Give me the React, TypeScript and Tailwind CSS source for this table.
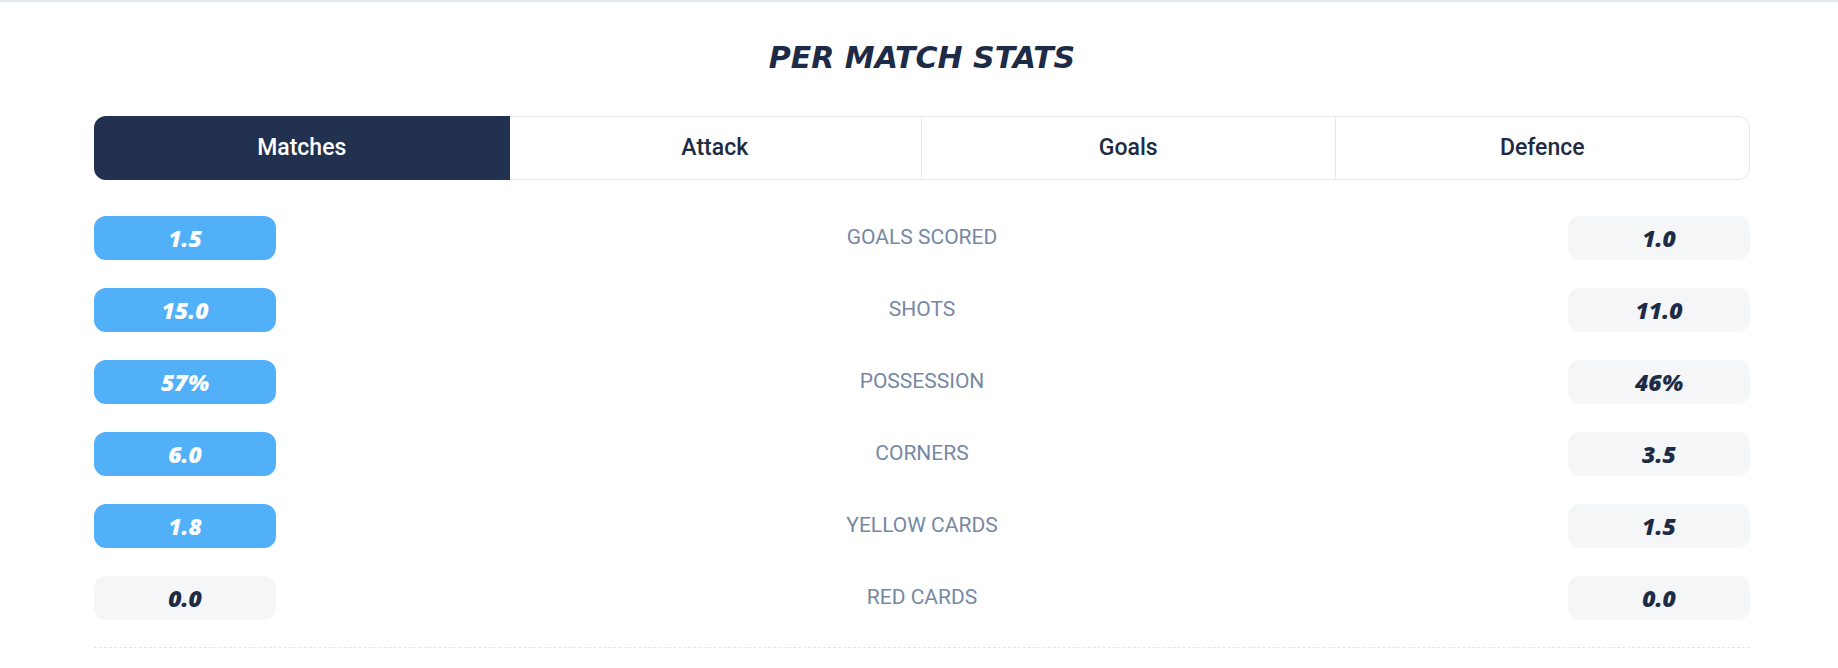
import React, { useState } from "react";

const TABS = ["Matches", "Attack", "Goals", "Defence"];

const ROWS = [
  { label: "GOALS SCORED", home: "1.5", away: "1.0", lead: true },
  { label: "SHOTS", home: "15.0", away: "11.0", lead: true },
  { label: "POSSESSION", home: "57%", away: "46%", lead: true },
  { label: "CORNERS", home: "6.0", away: "3.5", lead: true },
  { label: "YELLOW CARDS", home: "1.8", away: "1.5", lead: true },
  { label: "RED CARDS", home: "0.0", away: "0.0", lead: false },
];

// wide stand-in for the heavy italic display face
const titleFont = { fontFamily: '"DejaVu Sans", "Open Sans", sans-serif' };
const valueFont = { fontFamily: '"Open Sans", "Liberation Sans", sans-serif' };

function ValuePill({ value, active }: { value: string; active: boolean }) {
  return (
    <div
      style={valueFont}
      className={
        active
          ? "flex h-[44px] w-[182px] items-center justify-center rounded-[12px] bg-[#52b0f9] text-[23px] font-extrabold italic text-white"
          : "flex h-[44px] w-[182px] items-center justify-center rounded-[12px] bg-[#f4f6f8] text-[23px] font-extrabold italic text-[#1d2b46]"
      }
    >
      {value}
    </div>
  );
}

export default function App() {
  const [tab, setTab] = useState(0);

  return (
    <div
      className="min-h-[668px] w-full border-t-2 border-[#e3e8ef] bg-white"
      style={{ fontFamily: 'Roboto, "Liberation Sans", sans-serif' }}
    >
      <div className="pl-[94px] pr-[88px] pt-[36px]">
        <h2
          style={titleFont}
          className="text-center text-[30px] font-bold italic leading-[40px] text-[#1d2b46]"
        >
          PER MATCH STATS
        </h2>

        <div className="mt-[38px] grid h-[64px] grid-cols-4 rounded-[12px] border border-[#e5e7eb]">
          {TABS.map((t, i) => (
            <button
              key={t}
              type="button"
              onClick={() => setTab(i)}
              className={
                i === tab
                  ? "-m-px flex items-center justify-center rounded-l-[12px] bg-[#22314f] text-[23px] font-medium text-white"
                  : i === 3
                    ? "flex items-center justify-center text-[23px] font-medium text-[#1d2b46]"
                    : "flex items-center justify-center border-r border-[#e5e7eb] text-[23px] font-medium text-[#1d2b46]"
              }
            >
              {t}
            </button>
          ))}
        </div>

        <div className="mt-[36px] flex flex-col gap-[28px]">
          {ROWS.map((r) => (
            <div key={r.label} className="flex items-center justify-between">
              <ValuePill value={r.home} active={r.lead} />
              <span className="text-[21px] text-[#7788a4]">{r.label}</span>
              <ValuePill value={r.away} active={false} />
            </div>
          ))}
        </div>

        <div className="mt-[27px] border-t border-dashed border-[#e3e6ea]" />
      </div>
    </div>
  );
}
